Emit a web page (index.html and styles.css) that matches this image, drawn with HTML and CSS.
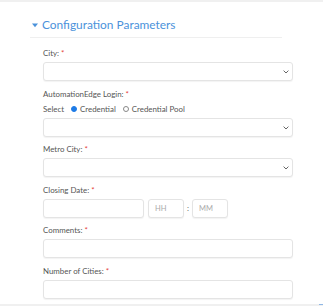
FILE: index.html
```html
<!DOCTYPE html>
<html>
<head>
<meta charset="utf-8">
<link rel="stylesheet" href="styles.css">
</head>
<body>
<div class="topbar"></div>
<div class="section">
  <div class="heading">
    <svg class="caret" width="6" height="5" viewBox="0 0 6 5"><path d="M0 0.5 L6 0.5 L3 4.2 Z" fill="#4b92db"/></svg>
    <span>Configuration Parameters</span>
  </div>
  <div class="form">
    <div class="field">
      <div class="label">City: <span class="req">*</span></div>
      <div class="input select"><svg class="chev" width="6" height="4" viewBox="0 0 6 4"><path d="M0.6 0.6 L3 3 L5.4 0.6" fill="none" stroke="#666" stroke-width="1"/></svg></div>
    </div>
    <div class="field">
      <div class="label">AutomationEdge Login: <span class="req">*</span></div>
      <div class="radios">
        <span class="rtext">Select</span>
        <span class="radio on"></span><span class="rtext">Credential</span>
        <span class="radio off"></span><span class="rtext">Credential Pool</span>
      </div>
      <div class="input select"><svg class="chev" width="6" height="4" viewBox="0 0 6 4"><path d="M0.6 0.6 L3 3 L5.4 0.6" fill="none" stroke="#666" stroke-width="1"/></svg></div>
    </div>
    <div class="field">
      <div class="label">Metro City: <span class="req">*</span></div>
      <div class="input select"><svg class="chev" width="6" height="4" viewBox="0 0 6 4"><path d="M0.6 0.6 L3 3 L5.4 0.6" fill="none" stroke="#666" stroke-width="1"/></svg></div>
    </div>
    <div class="field">
      <div class="label">Closing Date: <span class="req">*</span></div>
      <div class="daterow">
        <div class="input date"></div>
        <div class="input time"><span class="ph">HH</span></div>
        <span class="colon">:</span>
        <div class="input time"><span class="ph">MM</span></div>
      </div>
    </div>
    <div class="field">
      <div class="label">Comments: <span class="req">*</span></div>
      <div class="input"></div>
    </div>
    <div class="field last">
      <div class="label">Number of Cities: <span class="req">*</span></div>
      <div class="input"></div>
    </div>
  </div>
</div>
<div class="bottombar"><span class="mark"></span></div>
</body>
</html>
```
FILE: styles.css
```css
html, body {
  margin: 0;
  padding: 0;
  background: #fff;
}
body {
  width: 323px;
  height: 306px;
  overflow: hidden;
  font-family: "Lato", "Liberation Sans", sans-serif;
  color: #555;
}
.topbar {
  height: 2px;
  background: #f0f0f0;
}
.section {
  padding-left: 30px;
}
.heading {
  width: 252px;
  box-sizing: border-box;
  padding-top: 13px;
  padding-bottom: 2px;
  height: 36px;
  border-bottom: 1px solid #efefef;
  display: flex;
  align-items: center;
  gap: 4px;
  padding-left: 2px;
  font-size: 11.9px;
  line-height: 20px;
  color: #4b92db;
}
.caret {
  display: block;
}
.form {
  margin-left: 13px;
  width: 250px;
  padding-top: 9px;
  padding-bottom: 5px;
}
.field {
  margin-bottom: 6.5px;
}
.field.last {
  margin-bottom: 0;
}
.label {
  font-size: 7.9px;
  line-height: 12px;
  margin-bottom: 3px;
  color: #555;
}
.req {
  color: #e53935;
}
.input {
  position: relative;
  height: 19px;
  box-sizing: border-box;
  border: 1px solid #e4e4e4;
  border-radius: 3px;
  background: #fff;
  box-shadow: 0 1px 1px rgba(0, 0, 0, 0.05);
}
.chev {
  position: absolute;
  right: 3px;
  top: 7px;
}
.radios {
  display: flex;
  align-items: center;
  height: 12px;
  margin-bottom: 3px;
  font-size: 7.9px;
  color: #555;
}
.rtext {
  line-height: 12px;
}
.radio {
  width: 6px;
  height: 6px;
  box-sizing: border-box;
  border-radius: 50%;
  margin-right: 3px;
}
.radio.on {
  margin-left: 7px;
  background: #1e7be6;
  border: 1px solid #1e7be6;
}
.radio.off {
  margin-left: 7px;
  border: 1px solid #888;
  background: #fff;
}
.daterow {
  display: flex;
  align-items: center;
}
.input.date {
  width: 101px;
  margin-right: 4px;
}
.input.time {
  width: 36px;
  display: flex;
  align-items: center;
  padding-left: 6px;
}
.ph {
  font-size: 7.5px;
  color: #aaa;
}
.colon {
  width: 8px;
  text-align: center;
  font-size: 8px;
  color: #666;
}
.bottombar {
  height: 3px;
  background: #f0f0f0;
  display: flex;
  justify-content: flex-end;
}
.mark {
  width: 4px;
  height: 1px;
  background: #8fb8e6;
}
```
